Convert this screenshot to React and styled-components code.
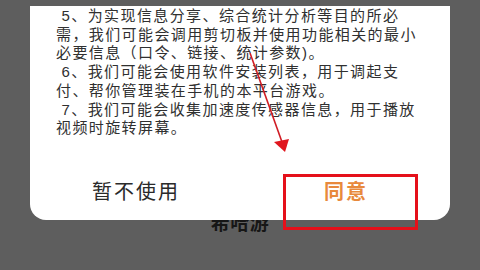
import React from "react";
import styled, { createGlobalStyle } from "styled-components";

const Global = createGlobalStyle`
  html, body { margin: 0; padding: 0; }
  body { font-family: "Liberation Sans", "Noto Sans CJK SC", sans-serif; }
`;

const Page = styled.div`
  position: relative;
  width: 480px;
  height: 270px;
  overflow: hidden;
  background: #5e5e5e;
  display: flex;
  flex-direction: column;
  align-items: center;
`;

const BackTitle = styled.div`
  margin-top: 213px;
  font-size: 19px;
  font-weight: 700;
  letter-spacing: 0.5px;
  color: #161616;
  line-height: 22px;
`;

const Card = styled.div`
  position: absolute;
  left: 30px;
  width: 420px;
  bottom: 50px;
  background: #fff;
  border-radius: 0 0 16px 16px;
  display: flex;
  flex-direction: column;
`;

const Body = styled.div`
  padding-left: 26px;
  padding-top: 1px;
  font-size: 15px;
  letter-spacing: 1.4px;
  line-height: 18.7px;
  color: #303030;
`;

const Line = styled.div`
  white-space: pre;
`;

const Actions = styled.div`
  margin-top: 22px;
  height: 60px;
  display: flex;
`;

const Action = styled.div`
  flex: 1;
  display: flex;
  align-items: center;
  justify-content: center;
  font-size: 20px;
  letter-spacing: 2px;
  padding-left: 2px;
  font-weight: ${(p) => (p.$primary ? 700 : 400)};
  color: ${(p) => (p.$primary ? "#e8893c" : "#2a2a2a")};
`;

const Highlight = styled.div`
  position: absolute;
  left: 283px;
  top: 174px;
  width: 135px;
  height: 56px;
  box-sizing: border-box;
  border: 3.5px solid #e5101a;
`;

const ArrowSvg = styled.svg`
  position: absolute;
  left: 0;
  top: 0;
`;

const lines = [
  " 5、为实现信息分享、综合统计分析等目的所必",
  "需，我们可能会调用剪切板并使用功能相关的最小",
  "必要信息（口令、链接、统计参数)。",
  " 6、我们可能会使用软件安装列表，用于调起支",
  "付、帮你管理装在手机的本平台游戏。",
  " 7、我们可能会收集加速度传感器信息，用于播放",
  "视频时旋转屏幕。",
];

export default function App() {
  return (
    <>
      <Global />
      <Page>
        <BackTitle>希哈游</BackTitle>
        <Card>
          <Body>
            {lines.map((l, i) => (
              <Line key={i}>{l}</Line>
            ))}
          </Body>
          <Actions>
            <Action>暂不使用</Action>
            <Action $primary>同意</Action>
          </Actions>
        </Card>
        <Highlight />
        <ArrowSvg width="480" height="270" viewBox="0 0 480 270">
          <line x1="250" y1="53" x2="282" y2="142" stroke="#d01c24" strokeWidth="1.6" />
          <polygon points="285,152 274,142 289,139" fill="#e0161e" />
        </ArrowSvg>
      </Page>
    </>
  );
}
